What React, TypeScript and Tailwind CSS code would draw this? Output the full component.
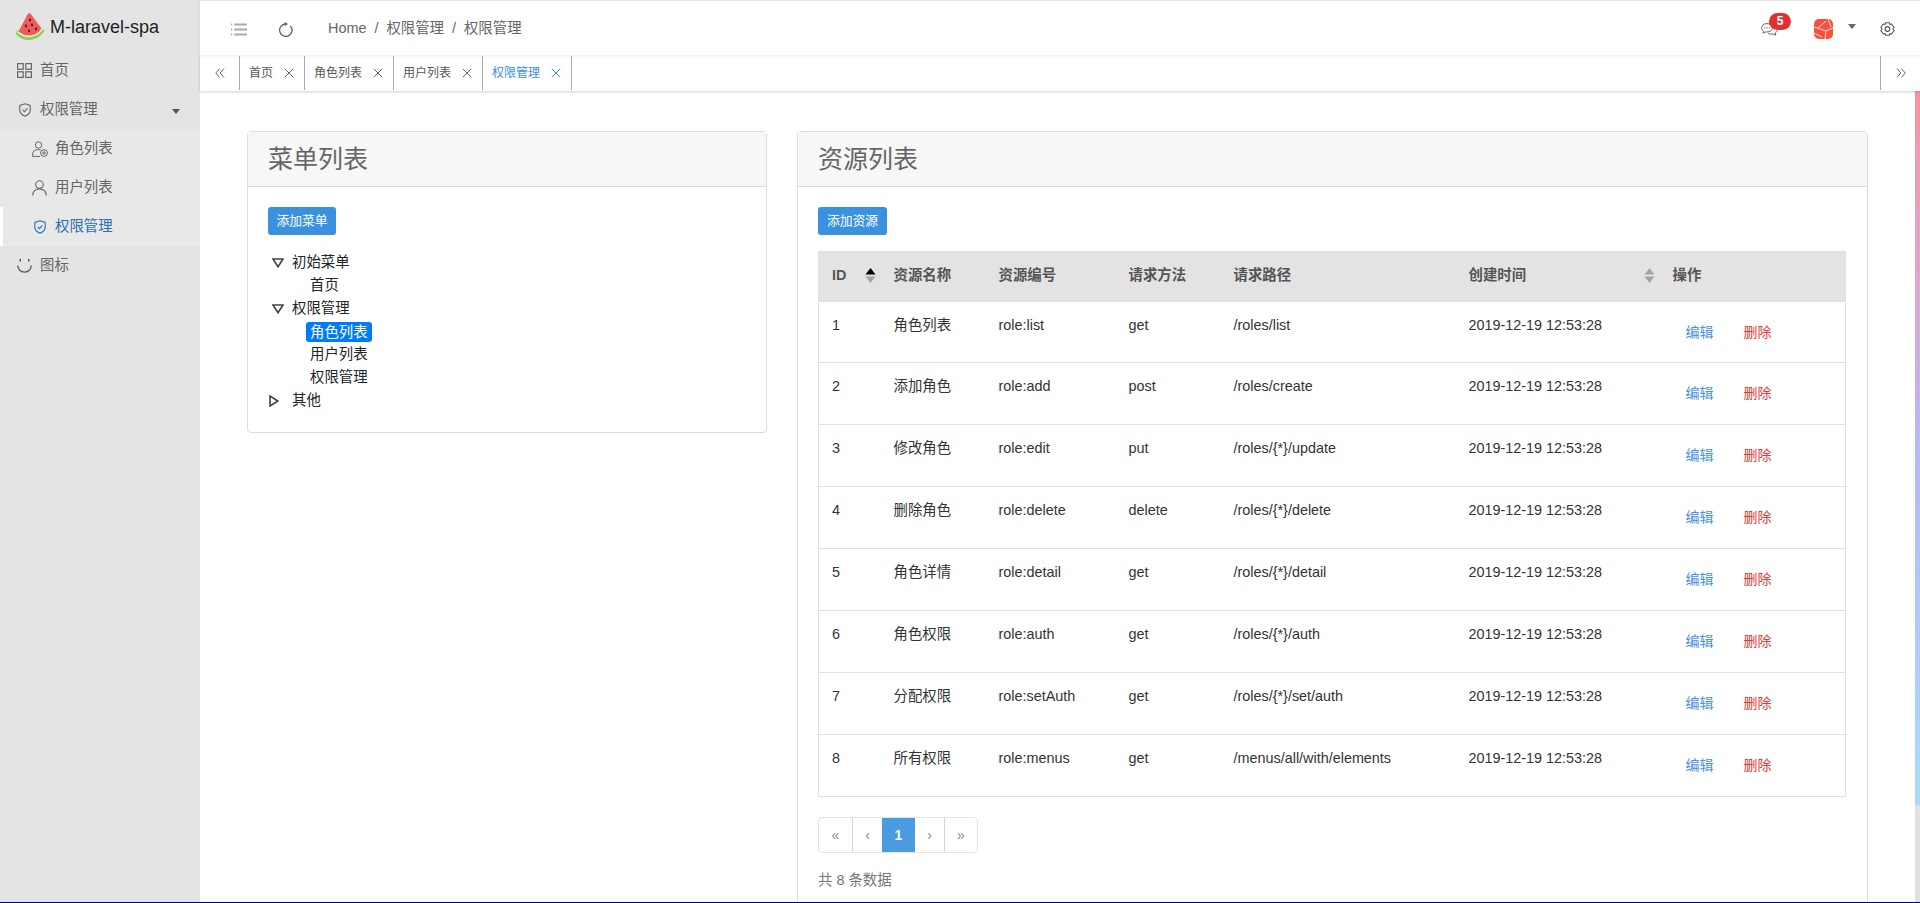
import React from "react";

const FONT = "font-['Liberation_Sans','Noto_Sans_CJK_SC',sans-serif]";

function Melon() {
  return (
    <svg width="30" height="28" viewBox="0 0 30 28" className="shrink-0">
      <path d="M0.5 20.5 C4 25 9 27.5 15 27 C21 26.5 26.5 23 29.5 17.5 L27.5 15.5 L3 17 Z" fill="#8ad15c" />
      <path d="M2.5 19.5 C7 23 11 24.5 15 24 C20 23.5 24.5 21 28 16.5 L15.5 1 C13.5 0.5 12.5 1.5 12 3 Z" fill="#f3f7d9" />
      <path d="M3.5 18.5 C8 22 12 23 15.5 22.5 C20 22 23.5 20 26.5 15.5 L15.5 0.5 C14 0 13 0.5 12.5 1.5 Z" fill="#ee5d5b" />
      <ellipse cx="15" cy="7" rx="1.1" ry="1.4" fill="#5a1c1c" />
      <ellipse cx="11" cy="13" rx="1.1" ry="1.4" fill="#5a1c1c" />
      <ellipse cx="17" cy="12" rx="1.1" ry="1.4" fill="#5a1c1c" />
      <ellipse cx="21" cy="16" rx="1.1" ry="1.4" fill="#5a1c1c" />
      <ellipse cx="14" cy="18" rx="1.1" ry="1.4" fill="#5a1c1c" />
    </svg>
  );
}

function GridIcon() {
  return (
    <svg width="15" height="15" viewBox="0 0 15 15" fill="none" stroke="#666" strokeWidth="1.2" className="shrink-0">
      <rect x="0.6" y="0.6" width="5.6" height="5.6" />
      <rect x="8.8" y="0.6" width="5.6" height="5.6" />
      <rect x="0.6" y="8.8" width="5.6" height="5.6" />
      <rect x="8.8" y="8.8" width="5.6" height="5.6" />
    </svg>
  );
}

function ShieldIcon({ color }: { color: string }) {
  return (
    <svg width="12" height="14" viewBox="0 0 12 14" fill="none" stroke={color} strokeWidth="1.1" className="shrink-0">
      <path d="M6 0.8 L11.2 2.5 V7.2 C11.2 10 8.8 12 6 13.2 C3.2 12 0.8 10 0.8 7.2 V2.5 Z" />
      <path d="M3.7 6.8 L5.5 8.6 L8.4 5.4" />
    </svg>
  );
}

function RoleIcon() {
  return (
    <svg width="16" height="16" viewBox="0 0 16 16" fill="none" stroke="#666" strokeWidth="1" className="shrink-0">
      <circle cx="6.5" cy="4" r="3.2" />
      <path d="M0.6 15.4 V13 C0.6 10.2 3 8.6 6.5 8.6 C7.3 8.6 8 8.7 8.6 8.9 M0.6 15.4 H8" />
      <circle cx="12" cy="12" r="3.4" />
      <circle cx="12" cy="12" r="1.2" />
    </svg>
  );
}

function UserIcon() {
  return (
    <svg width="15" height="16" viewBox="0 0 15 16" fill="none" stroke="#666" strokeWidth="1.1" className="shrink-0">
      <circle cx="7.5" cy="4.6" r="3.8" />
      <path d="M0.8 15.6 C0.8 11.4 3.6 9 7.5 9 C11.4 9 14.2 11.4 14.2 15.6" />
    </svg>
  );
}

function SmileIcon() {
  return (
    <svg width="15" height="15" viewBox="0 0 15 15" fill="none" stroke="#555" className="shrink-0">
      <path d="M0.8 7.5 C0.8 11.4 3.6 14.2 7.5 14.2 C11.4 14.2 14.2 11.4 14.2 7.5" strokeWidth="1.3" />
      <rect x="2.5" y="1" width="1.5" height="2.6" fill="#555" stroke="none" />
      <rect x="11" y="1" width="1.5" height="2.6" fill="#555" stroke="none" />
    </svg>
  );
}

function ListIcon() {
  return (
    <svg width="16" height="13" viewBox="0 0 16 13" stroke="#aaa" strokeWidth="1.8" className="shrink-0">
      <path d="M3.2 1.5 H16 M3.2 6.5 H16 M3.2 11.5 H16" />
      <path d="M0 1.5 H1.2 M0 6.5 H1.2 M0 11.5 H1.2" />
    </svg>
  );
}

function RefreshIcon() {
  return (
    <svg width="15" height="15" viewBox="0 0 15 15" className="shrink-0">
      <path d="M12.4 4 A6.2 6.2 0 1 1 7.4 2" fill="none" stroke="#666" strokeWidth="1.3" />
      <path d="M6.6 0 L10.2 2 L6.6 4 Z" fill="#666" />
    </svg>
  );
}

function ChatIcon() {
  return (
    <svg width="17" height="13" viewBox="0 0 17 13" fill="none" stroke="#666" strokeWidth="1" className="shrink-0">
      <path d="M6 0.6 C2.8 0.6 0.6 2.4 0.6 4.8 C0.6 6.2 1.3 7.3 2.4 8.1 L2 10.2 L4.6 8.9 C5.1 9 5.5 9 6 9 C9.2 9 11.4 7.1 11.4 4.8 C11.4 2.4 9.2 0.6 6 0.6 Z" />
      <path d="M7.2 10.4 C8.3 11.2 10.6 11.4 12 10.9 L14.6 12.2 L14.2 10 C15.6 9.2 16.4 8 16.4 6.6 C16.4 5.6 15.9 4.6 15 3.9" />
      <path d="M3.4 4.8 H4.4 M5.6 4.8 H6.6 M7.8 4.8 H8.8" stroke="#444" />
    </svg>
  );
}

function GearIcon() {
  return (
    <svg width="15" height="14" viewBox="0 0 14 13" fill="none" stroke="#555" strokeWidth="1" className="shrink-0">
      <path d="M5.3 0.6 H8.7 L9.2 2.2 L10.8 1.8 L13.2 5 L12 6.5 L13.2 8 L10.8 11.2 L9.2 10.8 L8.7 12.4 H5.3 L4.8 10.8 L3.2 11.2 L0.8 8 L2 6.5 L0.8 5 L3.2 1.8 L4.8 2.2 Z" strokeLinejoin="round" />
      <circle cx="7" cy="6.5" r="2.2" />
    </svg>
  );
}

function Avatar() {
  return (
    <svg width="19" height="20" viewBox="0 0 19 20" className="shrink-0">
      <rect width="19" height="20" rx="5" fill="#f4533d" />
      <path d="M0 8 L12 12 L19 9 M12 12 L11 20 M4 9 L12 2 M14 0 L17 8 M0 14 L8 18" stroke="#ffd9d2" strokeWidth="1" fill="none" />
    </svg>
  );
}

function Cross({ color }: { color: string }) {
  return (
    <svg width="10" height="10" viewBox="0 0 10 10" stroke={color} strokeWidth="1" className="shrink-0">
      <path d="M0.8 0.8 L9.2 9.2 M9.2 0.8 L0.8 9.2" />
    </svg>
  );
}

function Chevrons({ flip }: { flip?: boolean }) {
  return (
    <svg width="10" height="10" viewBox="0 0 10 10" fill="none" stroke="#666" strokeWidth="1" className={flip ? "rotate-180" : ""}>
      <path d="M4.6 0.6 L0.8 5 L4.6 9.4 M9 0.6 L5.2 5 L9 9.4" />
    </svg>
  );
}

function Tri({ dir }: { dir: "down" | "right" }) {
  return dir === "down" ? (
    <svg width="12" height="10" viewBox="0 0 12 10" fill="none" stroke="#444" strokeWidth="1.6" className="shrink-0">
      <path d="M1 1 H11 L6 8.8 Z" />
    </svg>
  ) : (
    <svg width="10" height="12" viewBox="0 0 10 12" fill="none" stroke="#444" strokeWidth="1.6" className="shrink-0">
      <path d="M1 1 V11 L8.8 6 Z" />
    </svg>
  );
}

function Sort({ active }: { active?: boolean }) {
  return (
    <svg width="11" height="15" viewBox="0 0 11 15" className="shrink-0">
      <path d="M5.5 0 L10.5 6.6 H0.5 Z" fill={active ? "#000" : "#a5a5a5"} />
      <path d="M5.5 15 L10.5 8.4 H0.5 Z" fill="#a5a5a5" />
    </svg>
  );
}

function SideItem({ icon, label, sub, active }: { icon: React.ReactNode; label: string; sub?: boolean; active?: boolean }) {
  return (
    <div
      className={`flex h-[39px] items-center text-[14.4px] ${sub ? "pl-8" : "pl-[17px]"} ${active ? "border-l-[3px] border-white pl-[29px] text-[#2a6fb0]" : "text-[#666]"}`}
    >
      <span className="mr-2 flex w-[15px] justify-center">{icon}</span>
      <span>{label}</span>
    </div>
  );
}

function Sidebar() {
  return (
    <aside className="flex w-[200px] shrink-0 flex-col bg-[#e4e4e4]">
      <div className="flex h-[51px] items-center pt-[2px] pl-[15px] text-lg text-[#222]">
        <Melon />
        <span className="ml-[5px]">M-laravel-spa</span>
      </div>
      <SideItem icon={<GridIcon />} label="首页" />
      <div className="relative">
        <SideItem icon={<ShieldIcon color="#666" />} label="权限管理" />
        <span className="absolute top-[19px] right-[20px] h-0 w-0 border-x-[4px] border-t-[5px] border-x-transparent border-t-[#555]" />
      </div>
      <div className="bg-[#e8e8e8]">
        <SideItem sub icon={<RoleIcon />} label="角色列表" />
        <SideItem sub icon={<UserIcon />} label="用户列表" />
        <SideItem sub active icon={<ShieldIcon color="#2a6fb0" />} label="权限管理" />
      </div>
      <SideItem icon={<SmileIcon />} label="图标" />
    </aside>
  );
}

function Header() {
  return (
    <header className="relative z-10 flex h-[55px] shrink-0 items-center border-t border-[#e4e4e4] bg-white pt-[2px] pr-[25px] pl-[31px] shadow-[0_1px_4px_rgba(0,0,0,0.08)]">
      <ListIcon />
      <span className="ml-[31px] flex"><RefreshIcon /></span>
      <nav className="ml-[35px] flex items-center gap-2 text-[14.4px] text-[#666]">
        <span>Home</span>
        <span>/</span>
        <span>权限管理</span>
        <span>/</span>
        <span>权限管理</span>
      </nav>
      <div className="ml-auto flex items-center">
        <div className="relative flex">
          <ChatIcon />
          <span className="absolute top-[-10px] left-[8px] flex h-[17px] w-[22px] items-center justify-center rounded-full bg-[#e3302f] text-xs font-bold text-white">5</span>
        </div>
        <span className="ml-[36px] flex"><Avatar /></span>
        <span className="mb-[5px] ml-[15px] h-0 w-0 border-x-[4.5px] border-t-[5px] border-x-transparent border-t-[#666]" />
        <span className="ml-[24px] flex"><GearIcon /></span>
      </div>
    </header>
  );
}

function TabItem({ label, active }: { label: string; active?: boolean }) {
  return (
    <div className={`flex items-center gap-[11px] border-r border-[#aaa] pr-[10px] pl-[9px] text-xs ${active ? "text-[#3a8ee6]" : "text-[#555]"}`}>
      <span className="mb-px">{label}</span>
      <Cross color={active ? "#3a8ee6" : "#666"} />
    </div>
  );
}

function Tabs() {
  return (
    <div className="relative z-[5] flex h-[36px] shrink-0 bg-white pt-px pb-px shadow-[0_1px_3px_rgba(0,0,0,0.18)]">
      <div className="flex w-10 items-center justify-center border-r border-[#aaa]"><Chevrons /></div>
      <TabItem label="首页" />
      <TabItem label="角色列表" />
      <TabItem label="用户列表" />
      <TabItem label="权限管理" active />
      <div className="ml-auto flex w-10 items-center justify-center border-l border-[#aaa]"><Chevrons flip /></div>
    </div>
  );
}

function TreeRow({ label, indent, tri }: { label: string; indent?: boolean; tri?: "down" | "right" }) {
  return (
    <div className={`flex h-[23px] items-center text-[14.4px] text-[#212529] ${indent ? "pl-[42px]" : ""}`}>
      {tri === "down" && <span className="mr-[9px] ml-1 flex w-[11px]"><Tri dir="down" /></span>}
      {tri === "right" && <span className="mr-[13px] ml-px flex w-[10px]"><Tri dir="right" /></span>}
      <span>{label}</span>
    </div>
  );
}

function MenuCard() {
  return (
    <section className="w-[520px] shrink-0 self-start rounded border border-[#dcdcdc]">
      <div className="flex h-[55px] items-center border-b border-[#dcdcdc] bg-[#f7f7f7] pt-[2px] pl-5 text-[25px] text-[#666]">菜单列表</div>
      <div className="px-5 pt-5 pb-[20px]">
        <button className="h-7 w-[68px] rounded-[3px] bg-[#3a92de] text-[12.8px] text-white">添加菜单</button>
        <div className="mt-4">
          <TreeRow tri="down" label="初始菜单" />
          <TreeRow indent label="首页" />
          <TreeRow tri="down" label="权限管理" />
          <div className="flex h-[23px] items-center pl-[38px] text-[14.4px]">
            <span className="rounded-[3px] bg-[#007bff] px-1 leading-5 text-white">角色列表</span>
          </div>
          <TreeRow indent label="用户列表" />
          <TreeRow indent label="权限管理" />
          <TreeRow tri="right" label="其他" />
        </div>
      </div>
    </section>
  );
}

const rows = [
  ["1", "角色列表", "role:list", "get", "/roles/list"],
  ["2", "添加角色", "role:add", "post", "/roles/create"],
  ["3", "修改角色", "role:edit", "put", "/roles/{*}/update"],
  ["4", "删除角色", "role:delete", "delete", "/roles/{*}/delete"],
  ["5", "角色详情", "role:detail", "get", "/roles/{*}/detail"],
  ["6", "角色权限", "role:auth", "get", "/roles/{*}/auth"],
  ["7", "分配权限", "role:setAuth", "get", "/roles/{*}/set/auth"],
  ["8", "所有权限", "role:menus", "get", "/menus/all/with/elements"],
];

function ResourceTable() {
  return (
    <table className="mt-4 w-[1028px] table-fixed border-collapse border border-[#dee2e6] text-[14.4px] text-[#333]">
      <colgroup>
        <col className="w-[62px]" />
        <col className="w-[105px]" />
        <col className="w-[130px]" />
        <col className="w-[105px]" />
        <col className="w-[235px]" />
        <col className="w-[204px]" />
        <col />
      </colgroup>
      <thead>
        <tr className="h-[49px] border-b-2 border-[#dee2e6] bg-[#e3e3e3] text-left font-bold text-[#555]">
          <th className="px-[13px]">
            <div className="flex items-center justify-between">ID<span className="-mr-[8px]"><Sort active /></span></div>
          </th>
          <th className="px-[13px]">资源名称</th>
          <th className="px-[13px]">资源编号</th>
          <th className="px-[13px]">请求方法</th>
          <th className="px-[13px]">请求路径</th>
          <th className="px-[13px]">
            <div className="flex items-center justify-between">创建时间<span className="-mr-[8px]"><Sort /></span></div>
          </th>
          <th className="px-[13px]">操作</th>
        </tr>
      </thead>
      <tbody>
        {rows.map((r) => (
          <tr key={r[0]} className="h-[62px] border-t border-[#dee2e6]">
            <td className="px-[13px] pt-[13px] align-top leading-5">{r[0]}</td>
            <td className="px-[13px] pt-[13px] align-top leading-5">{r[1]}</td>
            <td className="px-[13px] pt-[13px] align-top leading-5">{r[2]}</td>
            <td className="px-[13px] pt-[13px] align-top leading-5">{r[3]}</td>
            <td className="px-[13px] pt-[13px] align-top leading-5">{r[4]}</td>
            <td className="px-[13px] pt-[13px] align-top leading-5">2019-12-19 12:53:28</td>
            <td className="px-[13px] pt-5 align-top leading-5">
              <div className="flex gap-[30px] pl-[13px] text-sm">
                <a className="text-[#4a90e2]">编辑</a>
                <a className="text-[#e53935]">删除</a>
              </div>
            </td>
          </tr>
        ))}
      </tbody>
    </table>
  );
}

function Pagination() {
  const items = [
    ["«", "w-[33px]"],
    ["‹", "w-[30px]"],
    ["1", "w-[33px]"],
    ["›", "w-[29px]"],
    ["»", "w-[33px]"],
  ];
  return (
    <div className="mt-5 flex h-9 w-fit rounded border border-[#e3e3e3] text-sm text-[#888]">
      {items.map(([t, w], i) => (
        <span
          key={i}
          className={`flex items-center justify-center ${w} ${t === "1" ? "bg-[#4a9be0] font-bold text-white" : ""} ${i > 0 && t !== "1" && i !== 3 ? "border-l border-[#d5d5d5]" : ""}`}
        >
          {t}
        </span>
      ))}
    </div>
  );
}

function ResourceCard() {
  return (
    <section className="h-[900px] w-[1071px] shrink-0 rounded border border-[#dcdcdc]">
      <div className="flex h-[55px] items-center border-b border-[#dcdcdc] bg-[#f7f7f7] pt-[2px] pl-5 text-[25px] text-[#666]">资源列表</div>
      <div className="px-5 pt-5">
        <button className="h-7 w-[69px] rounded-[3px] bg-[#3a92de] text-[12.8px] text-white">添加资源</button>
        <ResourceTable />
        <Pagination />
        <p className="mt-[17px] text-[14.4px] text-[#777]">共 8 条数据</p>
      </div>
    </section>
  );
}

function Scrollbar() {
  return (
    <div className="absolute top-0 right-0 bottom-0 w-[5px] bg-[#e0e0e0]">
      <div className="h-[714px] bg-gradient-to-b from-[#ff8f9f] via-[#b7b8f8] to-[#a8dcf8]" />
    </div>
  );
}

export default function App() {
  return (
    <div className={`flex h-[903px] w-[1920px] overflow-hidden border-b border-[#000080] bg-white ${FONT}`}>
      <Sidebar />
      <div className="flex min-w-0 flex-1 flex-col">
        <Header />
        <Tabs />
        <main className="relative min-h-0 flex-1 overflow-hidden">
          <div className="flex items-start gap-[30px] pt-[40px] pl-[47px]">
            <MenuCard />
            <ResourceCard />
          </div>
          <Scrollbar />
        </main>
      </div>
    </div>
  );
}
